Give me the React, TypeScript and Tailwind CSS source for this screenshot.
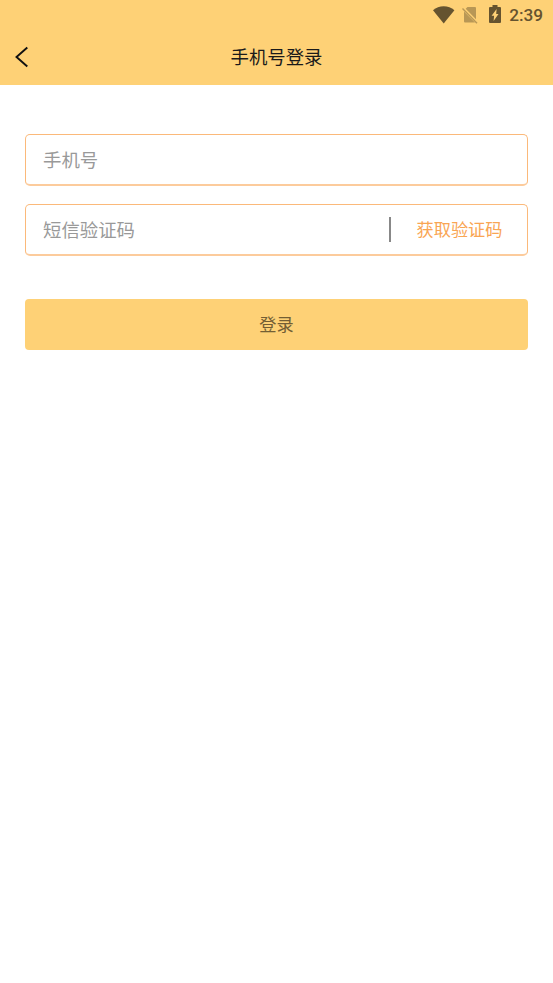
function StatusBar() {
  return (
    <div className="flex h-[30px] items-center justify-end pr-[10px] text-[#65532f]">
      <svg className="h-[18px] w-[22px]" viewBox="0 0 22 18" fill="currentColor">
        <path d="M0 4.200C3 1.700 6.700.3 10.700 .3S18.500 1.700 21.400 4.200L10.700 17.500Z" />
      </svg>
      <svg className="ml-[7px] h-[18px] w-[17px] opacity-45" viewBox="0 0 17 18" fill="currentColor">
        <path d="M5.500 1H13a1 1 0 0 1 1 1v11.300L3.700 2.800ZM2 5.500 13 16.500H3a1 1 0 0 1-1-1Z" />
        <path d="M.5 2.500 15 17.300" stroke="currentColor" strokeWidth="1.400" />
      </svg>
      <svg className="mb-[2px] ml-[10px] h-[18px] w-[12px]" viewBox="0 0 12 18" fill="currentColor">
        <path
          fillRule="evenodd"
          d="M3.500 0h5v2H11a1 1 0 0 1 1 1v14a1 1 0 0 1-1 1H1a1 1 0 0 1-1-1V3a1 1 0 0 1 1-1h2.500ZM7.600 4 2.600 10.800h2.500L4.600 16 9.500 9H7.200Z"
        />
      </svg>
      <span className="ml-[8px] pt-[2px] font-['Roboto',sans-serif] text-[17.200px] font-medium leading-none">2:39</span>
    </div>
  );
}

export default function App() {
  return (
    <div className="min-h-screen bg-white font-['Noto_Sans_CJK_SC',sans-serif]">
      <header className="h-[85px] bg-[#fed176]">
        <StatusBar />
        <div className="grid h-[53px] grid-cols-[60px_1fr_60px] items-center">
          <button type="button" aria-label="返回" className="pl-[15px]">
            <svg className="h-[22px] w-[14px]" viewBox="0 0 14 22" fill="none" stroke="#111" strokeWidth="1.900">
              <path d="M12.300 1.500 1.500 11l10.800 9.500" />
            </svg>
          </button>
          <h1 className="text-center text-[18.400px] leading-none text-[#1a1a1a]">手机号登录</h1>
        </div>
      </header>
      <main className="flex flex-col px-[25px] pt-[49px]">
        <input
          placeholder="手机号"
          className="h-[52px] rounded-[5px] border border-b-2 border-[#fbb97a] border-b-[#fccb9c] px-[17px] pb-[2px] text-[18.400px] outline-none placeholder:text-[#999]"
        />
        <div className="mt-[18px] flex h-[52px] items-center rounded-[5px] border border-b-2 border-[#fbb97a] border-b-[#fccb9c]">
          <input
            placeholder="短信验证码"
            className="min-w-0 flex-1 px-[17px] text-[18.400px] outline-none placeholder:text-[#999]"
          />
          <div className="h-[25px] w-[2px] bg-[#888]" />
          <button type="button" className="w-[136px] pb-[2px] pl-px text-[17.200px] text-[#f9a553]">
            获取验证码
          </button>
        </div>
        <button type="button" className="mt-[43px] h-[51px] rounded-[4px] bg-[#fed176] pb-px text-[17.200px] text-[#735e34]">
          登录
        </button>
      </main>
    </div>
  );
}
